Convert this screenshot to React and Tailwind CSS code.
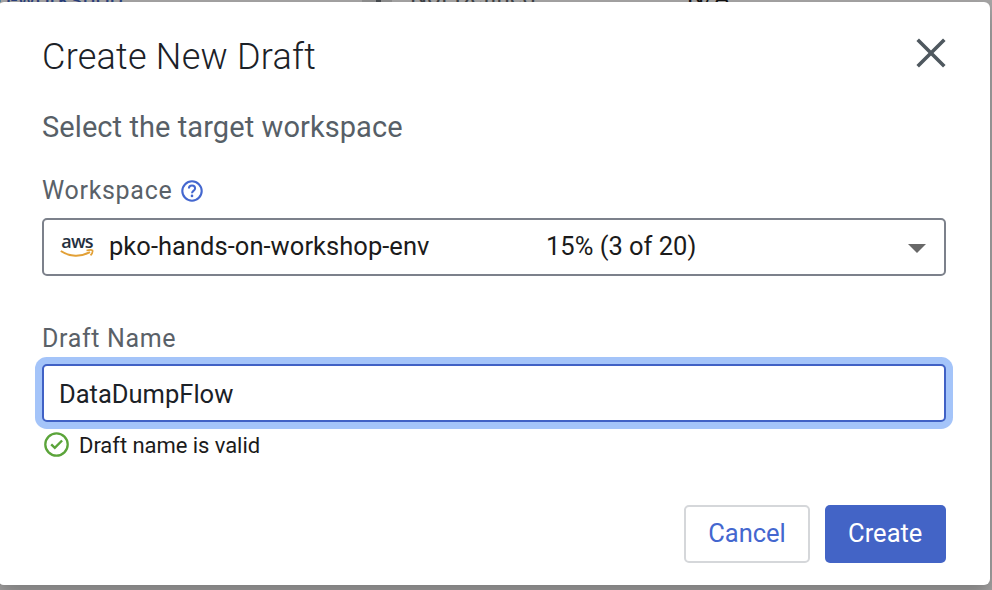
import React from "react";

function BackgroundRow() {
  return (
    <div className="flex h-[2px] items-end overflow-hidden text-[24px] leading-[24px] whitespace-nowrap">
      <div className="-mb-[9px] ml-[-3px] w-[365px] shrink-0 tracking-[0.1px] text-[#293e7a]">o-workshop</div>
      <div className="h-[2px] w-[30px] shrink-0 bg-[#8b8b8b] pl-[14px]">
        <div className="h-[2px] w-[5px] bg-[#45494d]" />
      </div>
      <div className="-mb-[7px] ml-[18px] w-[277px] shrink-0 text-[#3c3f43]">Not Defined</div>
      <div className="-mb-[7px] shrink-0 text-[#111]">N/A</div>
    </div>
  );
}

function CloseIcon() {
  return (
    <svg className="h-[30px] w-[30px]" viewBox="0 0 30 30" fill="none" stroke="#4f585f" strokeWidth="3.6">
      <path d="M1.7 1.7 28.3 28.3M28.3 1.7 1.7 28.3" />
    </svg>
  );
}

function HelpIcon() {
  return (
    <svg className="h-[22px] w-[22px]" viewBox="0 0 22 22" fill="none" stroke="#4467cf">
      <circle cx="11" cy="11" r="9.7" strokeWidth="2.1" />
      <path d="M7.9 8.6C7.9 6.7 9.2 5.6 11 5.6s3.1 1.1 3.1 2.8c0 2.1-3.1 2.4-3.1 4.9" strokeWidth="2" />
      <circle cx="11" cy="15.9" r="1.3" fill="#4467cf" stroke="none" />
    </svg>
  );
}

function AwsLogo() {
  return (
    <div className="-mt-[3px] flex w-[34px] flex-col items-center">
      <span className="font-['Open_Sans'] text-[18px] leading-[14px] font-semibold tracking-[-0.8px] text-[#252f3e]">aws</span>
      <svg className="mt-[1px] h-[9px] w-[34px]" viewBox="0 0 34 9" fill="none">
        <path d="M.8 2C9.500 8 21 8 30 3.200" stroke="#e2a036" strokeWidth="2" />
        <path d="M26.500 1.500C29.500 .8 31.500 .7 32.500 1.400 33 3 32 4.800 30.500 6.400" stroke="#e2a036" strokeWidth="1.700" />
      </svg>
    </div>
  );
}

function ValidIcon() {
  return (
    <svg className="-mt-[1px] h-[25px] w-[25px]" viewBox="0 0 25 25" fill="none" stroke="#5ba43a">
      <circle cx="12.500" cy="12.500" r="11.200" strokeWidth="2.300" />
      <path d="m7.200 12.400 3.600 3.500 7.300-7.400" strokeWidth="2.400" />
    </svg>
  );
}

export default function App() {
  return (
    <div className="h-[590px] w-[992px] overflow-hidden bg-[#a6a5a5] font-[Roboto,sans-serif]">
      <BackgroundRow />
      <div className="-ml-[2px] flex h-[583px] w-[992px] flex-col rounded-[6px] bg-white pr-[44px] pl-[44px] shadow-[0_10px_20px_0_rgba(0,0,0,0.25)]">
        <header className="flex items-start justify-between pt-[33px]">
          <h1 className="text-[36px] leading-[44px] font-light tracking-[0.25px] text-[#1b2127]">Create New Draft</h1>
          <button className="mt-[3px]" aria-label="Close"><CloseIcon /></button>
        </header>
        <h2 className="mt-[30px] text-[29px] leading-[36px] tracking-[0.08px] text-[#575f67]">Select the target workspace</h2>
        <div className="mt-[30px] flex h-[32px] items-center gap-[9px]">
          <label className="text-[25px] leading-[32px] tracking-[0.7px] text-[#5a6168]">Workspace</label>
          <HelpIcon />
        </div>
        <div className="mt-[11px] flex h-[58px] items-center rounded-[5px] border-2 border-[#7c818b] px-[16px] text-[25.5px] text-[#1b1b1b]">
          <AwsLogo />
          <span className="-mt-[2px] ml-[15px] w-[437px] tracking-[0.04px]">pko-hands-on-workshop-env</span>
          <span className="-mt-[2px] grow">15% (3 of 20)</span>
          <svg className="mt-[3px] mr-[2px] h-[9px] w-[18px]" viewBox="0 0 18 9"><path d="M0 0h18L9 9z" fill="#686868" /></svg>
        </div>
        <label className="mt-[47px] text-[25px] leading-[32px] tracking-[0.65px] text-[#5a6168]">Draft Name</label>
        <input
          className="mt-[9px] h-[58px] rounded-[5px] border-2 border-[#4061c5] bg-white px-[15px] pt-[1px] text-[25.5px] text-[#1b2127] shadow-[0_0_0_7px_#a4c4f9] outline-none"
          defaultValue="DataDumpFlow"
        />
        <div className="mt-[8px] flex h-[30px] items-center gap-[10px] pl-[2px]">
          <ValidIcon />
          <span className="mt-[2px] text-[22px] leading-[30px] tracking-[-0.05px] text-[#1b1b1b]">Draft name is valid</span>
        </div>
        <footer className="mt-[45px] flex justify-end gap-[14.5px] text-[25.5px]">
          <button className="h-[58px] w-[126px] rounded-[5px] border-2 border-[#d5d7da] pb-[2px] text-[#4467cf]">Cancel</button>
          <button className="h-[58px] w-[121.5px] rounded-[5px] bg-[#4364c6] pb-[2px] text-white">Create</button>
        </footer>
      </div>
    </div>
  );
}
